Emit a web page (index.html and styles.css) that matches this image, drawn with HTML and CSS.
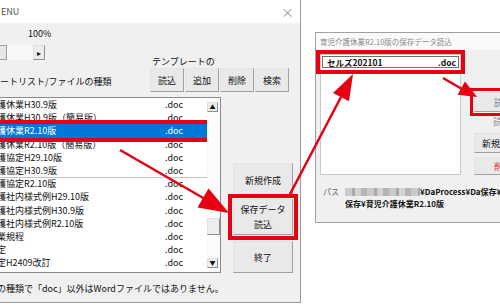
FILE: index.html
```html
<!DOCTYPE html>
<html>
<head>
  <meta charset="utf-8">
  <title>MENU</title>
  <link rel="stylesheet" href="styles.css">
</head>
<body>

<!-- Main menu window -->
<div class="win">
  <div class="win-title">
    <span>ENU</span>
    <span class="close">×</span>
  </div>

  <div class="zoom-value">100%</div>

  <div class="tool-row">
    <div class="hscroll">
      <span class="hs-left"></span>
      <span class="hs-track"></span>
      <span class="hs-right">▸</span>
    </div>
    <span class="tpl-label">テンプレートの</span>
  </div>

  <div class="head-row">
    <span class="list-label">ートリスト/ファイルの種類</span>
    <div class="tool-buttons">
      <button>読込</button>
      <button>追加</button>
      <button>削除</button>
      <button>検索</button>
    </div>
  </div>

  <div class="main-row">
    <div class="listbox">
      <div class="rows">
        <div class="row"><span class="name">護休業H30.9版</span><span>.doc</span></div>
        <div class="row"><span class="name">護休業H30.9版（簡易版）</span><span>.doc</span></div>
        <div class="row selected"><span class="name">護休業R2.10版</span><span>.doc</span></div>
        <div class="row"><span class="name">護休業R2.10版（簡易版）</span><span>.doc</span></div>
        <div class="row"><span class="name">護協定H29.10版</span><span>.doc</span></div>
        <div class="row"><span class="name">護協定H30.9版</span><span>.doc</span></div>
        <div class="row sep"><span class="name">護協定R2.10版</span><span>.doc</span></div>
        <div class="row"><span class="name">護社内様式例H29.10版</span><span>.doc</span></div>
        <div class="row"><span class="name">護社内様式例H30.9版</span><span>.doc</span></div>
        <div class="row"><span class="name">護社内様式例R2.10版</span><span>.doc</span></div>
        <div class="row"><span class="name">業規程</span><span>.doc</span></div>
        <div class="row"><span class="name">定</span><span>.doc</span></div>
        <div class="row"><span class="name">定H2409改訂</span><span>.doc</span></div>
      </div>
      <div class="vscroll">
        <span class="vs-btn vs-up">▲</span>
        <span class="vs-btn vs-thumb"></span>
        <span class="vs-btn vs-down">▼</span>
      </div>
    </div>

    <div class="side-buttons">
      <button class="btn-new">新規作成</button>
      <button class="btn-load mark">保存データ<br>読込</button>
      <button class="btn-exit">終了</button>
    </div>
  </div>

  <p class="note">の種類で「doc」以外はWordファイルではありません。</p>
</div>

<!-- Load dialog -->
<div class="dlg">
  <div class="dlg-title">育児介護休業R2.10版の保存データ読込</div>
  <div class="dlg-body">
    <div class="dlg-main">
      <div class="file-list">
        <div class="file-item"><span class="file-name">セルズ202101</span><span>.doc</span></div>
      </div>
      <div class="dlg-buttons">
        <button class="mark far">読込</button>
        <span class="cut">読</span>
        <button>新規作成</button>
        <button class="far red-text">削除</button>
      </div>
    </div>
    <div class="path">
      <span class="path-label">パス</span>
      <div class="path-value">
        <div><span class="blur"></span>¥DaProcess¥Da保存¥</div>
        <div>保存¥育児介護休業R2.10版</div>
      </div>
    </div>
  </div>
</div>

<!-- Red arrows drawn over both windows -->
<svg class="arrows" width="500" height="308" viewBox="0 0 500 308">
  <g fill="#e60012" stroke="#e60012" stroke-width="2.5">
    <line x1="120" y1="150" x2="205" y2="199"/>
    <polygon points="229,213 197.5,207.5 208.5,188.5" stroke="none"/>
    <line x1="289" y1="196" x2="341" y2="97"/>
    <polygon points="353,74 349,101.3 333,92.9" stroke="none"/>
    <line x1="443" y1="78" x2="462" y2="89"/>
    <polygon points="477,97 457.6,94.8 465,81.6" stroke="none"/>
  </g>
</svg>

</body>
</html>
```

FILE: styles.css
```css
body {
  margin: 0;
  width: 500px;
  height: 308px;
  overflow: hidden;
  position: relative;
  background: #fff;
  font-family: "Noto Sans CJK JP", "Noto Sans", sans-serif;
  font-size: 9px;
  color: #111;
}

button {
  font-family: inherit;
  font-size: 9px;
  color: #111;
  background: #e9e9e9;
  border: 1px solid;
  border-color: #e4e4e4 #a0a0a0 #a0a0a0 #e4e4e4;
  padding: 0;
  margin: 0;
  box-sizing: border-box;
}

/* main window */
.win {
  position: absolute;
  left: 0;
  top: 0;
  width: 300px;
  height: 302px;
  background: #f0f0f0;
  border-right: 1px solid #9a9a9a;
  border-bottom: 1px solid #9a9a9a;
  display: flex;
  flex-direction: column;
}

.win-title {
  height: 23px;
  background: #fff;
  display: flex;
  align-items: center;
  justify-content: space-between;
  padding: 0 6px 0 1px;
  color: #555;
}

.close {
  font-size: 13px;
  color: #999;
}

.zoom-value {
  height: 22px;
  line-height: 22px;
  padding-left: 28px;
}

.tool-row {
  display: flex;
  height: 23px;
}

.hscroll {
  display: flex;
  height: 15px;
}

.hs-left {
  width: 7px;
  box-sizing: border-box;
  border: 1px solid #a0a0a0;
  border-left: none;
  background: #e6e6e6;
}

.hs-track {
  width: 26px;
  background: #f8f8f8;
}

.hs-right {
  width: 12px;
  box-sizing: border-box;
  border: 1px solid;
  border-color: #e0e0e0 #909090 #909090 #e0e0e0;
  background: #ececec;
  font-size: 8px;
  line-height: 13px;
  text-align: center;
}

.tpl-label {
  margin-left: 107px;
  align-self: flex-end;
  line-height: 12px;
}

.head-row {
  display: flex;
  align-items: center;
  height: 24px;
}

.list-label {
  width: 150px;
  padding-top: 3px;
}

.tool-buttons {
  display: flex;
  gap: 1px;
}

.tool-buttons button {
  width: 34px;
  height: 24px;
}

.main-row {
  display: flex;
  margin-top: 5px;
  height: 176px;
}

.listbox {
  width: 221px;
  box-sizing: border-box;
  display: flex;
  background: #fff;
  border-top: 1px solid #8a8a8a;
  border-bottom: 1px solid #8a8a8a;
  border-right: 1px solid #8a8a8a;
}

.rows {
  width: 207px;
}

.row {
  display: flex;
  height: 13.2px;
  line-height: 13.2px;
  white-space: nowrap;
}

.row .name {
  width: 168px;
  margin-left: -3px;
  flex-shrink: 0;
}

.row.selected {
  background: #0078d7;
  color: #fff;
  outline: 4px solid #e60012;
}

.row.sep {
  box-shadow: inset 0 1px 0 #c4c4c4;
}

.vscroll {
  width: 13px;
  display: flex;
  flex-direction: column;
  background: #fbfbfb;
}

.vs-btn {
  width: 11px;
  height: 10px;
  box-sizing: border-box;
  border: 1px solid;
  border-color: #e0e0e0 #909090 #909090 #e0e0e0;
  background: #ededed;
  font-size: 6px;
  line-height: 8px;
  text-align: center;
}

.vs-up { margin-top: 4px; }

.vs-thumb {
  margin-top: 106px;
  width: 13px;
  height: 17px;
}

.vs-down { margin-top: 23px; }

.side-buttons {
  margin-left: 12px;
  width: 60px;
  display: flex;
  flex-direction: column;
  justify-content: flex-end;
}

.btn-new { height: 35px; }

.btn-load {
  height: 36px;
  margin-top: 1px;
  line-height: 15px;
}

.btn-exit {
  height: 32px;
  margin-top: 6px;
}

.side-buttons .mark {
  outline: 4px solid #e60012;
  outline-offset: 1px;
}

.note {
  margin: 9px 0 0 -3px;
  line-height: 14px;
  white-space: nowrap;
}

/* load dialog */
.dlg {
  position: absolute;
  left: 315px;
  top: 32px;
  width: 200px;
  height: 191px;
  box-sizing: border-box;
  border: 1px solid #a0a0a0;
  background: #f0f0f0;
  display: flex;
  flex-direction: column;
}

.dlg-title {
  height: 17px;
  line-height: 17px;
  padding-left: 4px;
  font-size: 7.5px;
  color: #888;
  background: #fafafa;
  white-space: nowrap;
}

.dlg-body {
  padding: 4px 0 0 4px;
}

.dlg-main {
  display: flex;
}

.file-list {
  width: 145px;
  height: 121px;
  box-sizing: border-box;
  background: #fff;
  border: 1px solid #c8c8c8;
  padding: 1px;
}

.file-item {
  display: flex;
  height: 12px;
  box-sizing: border-box;
  border: 1px solid #707070;
  padding-left: 4px;
  font-weight: bold;
  font-size: 8.5px;
  line-height: 10px;
  outline: 4px solid #e60012;
  outline-offset: 2px;
}

.file-name {
  width: 111px;
}

.dlg-buttons {
  margin-left: 13px;
  display: flex;
  flex-direction: column;
  align-items: flex-start;
}

.dlg-buttons button {
  width: 40px;
  height: 20px;
  margin-top: 4px;
  text-align: left;
  padding-left: 7px;
  white-space: nowrap;
}

.dlg-buttons .mark {
  margin-top: 38px;
  outline: 3px solid #e60012;
  outline-offset: 1px;
}

.dlg-buttons .far {
  padding-left: 19px;
  color: #6a7a99;
}

.dlg-buttons .red-text {
  color: #d33;
  height: 18px;
}

.cut {
  margin-top: 3px;
  padding-left: 19px;
  line-height: 14px;
  color: #888;
}

.path {
  display: flex;
  margin-top: 11px;
  padding-left: 3px;
  line-height: 12px;
  font-size: 8px;
}

.path-label {
  width: 22px;
  color: #666;
}

.path-value {
  font-weight: bold;
  white-space: nowrap;
}

.blur {
  display: inline-block;
  width: 75px;
  height: 8px;
  vertical-align: -1px;
  background: repeating-linear-gradient(90deg, #cacaca 0 7px, #a9a9a9 7px 10px, #d2d2d2 10px 16px, #b4b4b4 16px 22px);
}

.arrows {
  position: absolute;
  left: 0;
  top: 0;
  pointer-events: none;
}
```
